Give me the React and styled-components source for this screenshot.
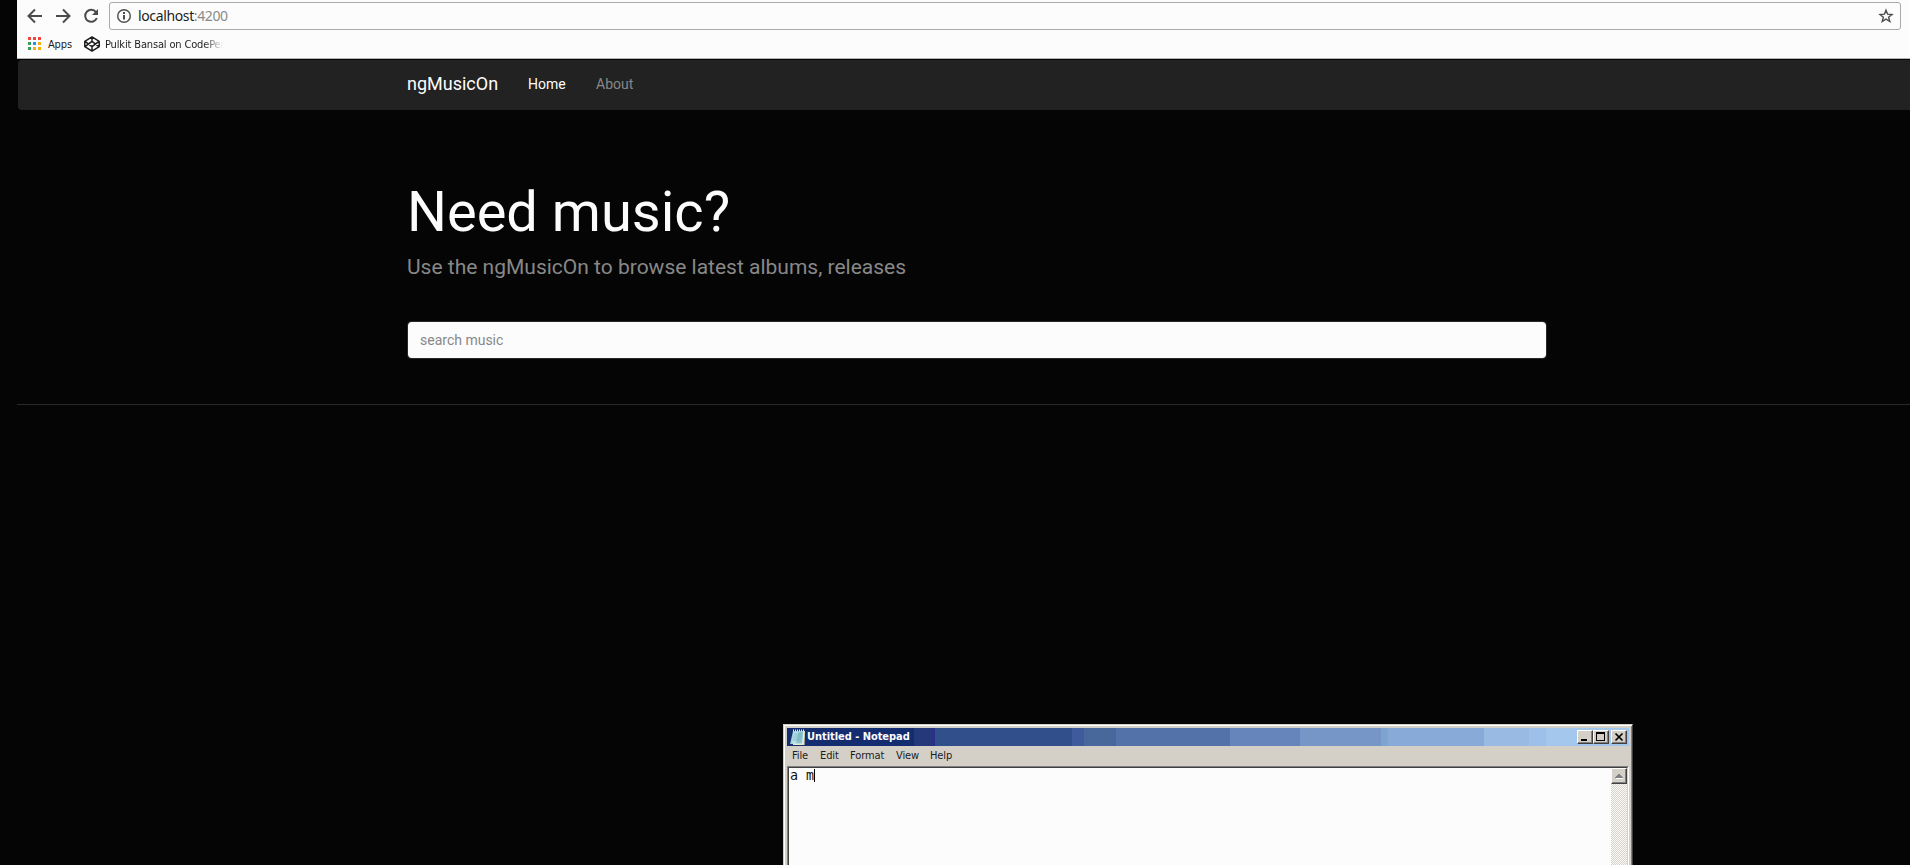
import React from "react";
import styled, { createGlobalStyle } from "styled-components";

const Global = createGlobalStyle`
  * { box-sizing: border-box; }
  html, body { margin: 0; background: #050505; overflow: hidden; }
`;

const Desktop = styled.div`
  position: relative;
  width: 1910px;
  height: 865px;
  padding-left: 17px;
  background: #050505;
  overflow: hidden;
  font-family: Roboto, sans-serif;
`;

const BrowserChrome = styled.header`
  height: 59px;
  padding-top: 2px;
  background: #fcfcfc;
  border-bottom: 1px solid #b4b4b4;
`;

const Toolbar = styled.div`
  display: flex;
  align-items: center;
  height: 28px;
  padding: 0 9px 0 10px;
`;

const ToolIcon = styled.svg`
  flex: none;
  width: 16px;
  height: 16px;
  margin-right: ${(p) => p.$gap || 0}px;
  fill: none;
  stroke: #4c4c4c;
  stroke-width: 2;
`;

const AddressBar = styled.div`
  display: flex;
  align-items: center;
  flex: 1;
  height: 28px;
  padding: 0 6px 0 6px;
  border: 1px solid #a9a9a9;
  border-radius: 3px;
  background: #fcfcfc;
`;

const Url = styled.div`
  flex: 1;
  font: 14px/20px "Noto Sans", sans-serif;
  letter-spacing: -0.37px;
  color: #1c1c1c;
  span { color: #8a8a8a; }
`;

const Bookmarks = styled.div`
  display: flex;
  align-items: center;
  height: 28px;
  padding-left: 11px;
`;

const Bookmark = styled.div`
  display: flex;
  align-items: center;
  gap: ${(p) => p.$gap}px;
  width: ${(p) => p.$width}px;
  font: 11px/16px "DejaVu Sans Condensed", sans-serif;
  font-stretch: condensed;
  letter-spacing: -0.15px;
  white-space: nowrap;
  color: #1c1c1c;
  svg { flex: none; }
`;

const BookmarkLabel = styled.span`
  padding-top: 2px;
`;

const FadingLabel = styled(BookmarkLabel)`
  width: 118px;
  overflow: hidden;
  mask-image: linear-gradient(to right, #000 84%, transparent);
`;

const Navbar = styled.nav`
  display: flex;
  align-items: center;
  height: 50px;
  margin: 1px 0 0 1px;
  padding: 0 0 2px 389px;
  background: #222;
  border-radius: 4px 0 0 4px;
`;

const Brand = styled.a`
  width: 121px;
  font-size: 18px;
  line-height: 20px;
  color: #fcfcfc;
`;

const NavItem = styled.a`
  width: 68px;
  font-size: 14px;
  line-height: 20px;
  color: ${(p) => (p.$active ? "#fcfcfc" : "#888")};
`;

const Main = styled.main`
  padding: 71px 0 0 390px;
`;

const Title = styled.h1`
  margin: 0;
  font-size: 56px;
  font-weight: 400;
  line-height: 62px;
  color: #fcfcfc;
`;

const Lead = styled.p`
  margin: 9px 0 39px;
  font-size: 21px;
  line-height: 30px;
  color: #888;
`;

const SearchInput = styled.input`
  display: block;
  width: 1140px;
  height: 38px;
  padding: 0 12px;
  border: 1px solid #282828;
  border-radius: 4px;
  outline: none;
  background: #fcfcfc;
  background-clip: padding-box;
  font: 14px/20px Roboto, sans-serif;
  &::placeholder { color: #888; opacity: 1; }
`;

const Divider = styled.hr`
  margin: 45px 0 0;
  border: 0;
  border-top: 1px solid #282828;
`;

const Window = styled.section`
  position: absolute;
  left: 783px;
  top: 724px;
  width: 850px;
  height: 180px;
  padding: 2px;
  background: #d4d0c8;
  border: 1px solid;
  border-color: #d4d0c8 #404040 #404040 #d4d0c8;
  box-shadow: inset 1px 1px #fff, inset -1px 0 #808080;
`;

const TitleBar = styled.div`
  display: flex;
  align-items: center;
  height: 18px;
  margin: 1px 1px 0;
  padding: 0 2px 0 3px;
  background: linear-gradient(
    to right,
    #142c70 0 127px, #24387a 127px 145px, #28328a 145px 148px,
    #304f8b 148px 285px, #405b9b 285px 297px, #48679b 297px 329px,
    #5372a9 329px 443px, #6685bb 443px 513px, #7796c8 513px 594px,
    #7ca4cf 594px 601px, #88aad9 601px 697px, #98bae3 697px 742px,
    #9dc0ea 742px 759px, #a3c7ed 759px
  );
`;

const WindowTitle = styled.div`
  flex: 1;
  margin-left: 2px;
  font: bold 11px/16px "DejaVu Sans Condensed", sans-serif;
  font-stretch: condensed;
  letter-spacing: -0.04px;
  color: #fcfcfc;
`;

const RaisedButton = styled.button`
  flex: none;
  display: block;
  width: 16px;
  height: ${(p) => p.$height || 14}px;
  margin-left: ${(p) => p.$gap || 0}px;
  padding: 0;
  border: 1px solid;
  border-color: #fff #404040 #404040 #fff;
  background: #d4d0c8;
  box-shadow: inset -1px -1px #808080;
  svg { display: block; }
`;

const MenuBar = styled.div`
  display: flex;
  height: 20px;
  margin: 0 1px;
  padding-left: 5px;
  font: 11px/20px "DejaVu Sans Condensed", sans-serif;
  font-stretch: condensed;
  letter-spacing: -0.1px;
  color: #1c1c1c;
`;

const MenuItem = styled.span`
  width: ${(p) => p.$width}px;
`;

const Editor = styled.div`
  display: flex;
  height: 120px;
  margin: 0 1px;
  border: 1px solid;
  border-color: #808080 #fff #fff #808080;
`;

const EditorInner = styled.div`
  display: flex;
  flex: 1;
  border: 1px solid;
  border-color: #404040 #d4d0c8 #d4d0c8 #404040;
`;

const TextArea = styled.div`
  display: flex;
  flex: 1;
  padding: 1px 0 0 1px;
  background: #fcfcfc;
  font: 13.3px/13px "DejaVu Sans Mono", monospace;
  white-space: pre;
  color: #111;
`;

const Caret = styled.i`
  width: 1px;
  height: 13px;
  background: #000;
`;

const ScrollTrack = styled.div`
  width: 16px;
  background: repeating-conic-gradient(#fcfcfc 0 25%, #d4d0c8 0 50%) 0 0 / 2px 2px;
`;

const dots = [
  ["#f0453a", "#f0453a", "#f0453a"],
  ["#33a15a", "#2490f0", "#f7ae0c"],
  ["#33a15a", "#f7ae0c", "#f7ae0c"],
];

const AppsIcon = () => (
  <svg width="13" height="14" shapeRendering="crispEdges">
    {dots.map((row, y) =>
      row.map((c, x) => (
        <rect key={`${x}${y}`} x={x * 5} y={y * 5} width="3" height="3" fill={c} />
      ))
    )}
  </svg>
);

const CodePenIcon = () => (
  <svg width="16" height="16" viewBox="0 0 16 16" fill="none" stroke="#1c1c1c" strokeWidth="1.5" strokeLinejoin="round">
    <path d="M8 .9 15.200 5.300v5.400L8 15.100.8 10.700V5.300zM8 1v4.300M8 10.700V15M1 5.300l7 5.400 7-5.400M1 10.700l7-5.400 7 5.400" />
  </svg>
);

const NotepadIcon = () => (
  <svg width="15" height="16" viewBox="0 0 15 16">
    <path d="M4 2h11l-.5 14H3z" fill="#e4ddae" />
    <path d="M3 2h10.500l-1 13H0z" fill="#8cc5d0" />
    <path d="M3.500 3h5L6 14.500H1z" fill="#b8e0e6" />
    <path d="M13.700 2.500l-1 12.500H3" fill="none" stroke="#edf5ee" />
    <path d="M3 1.500h11" stroke="#e9f0ef" strokeDasharray="1 1" strokeWidth="2" />
    <path d="M4 5h8M3.500 7h8M3 9h8M2.500 11h8" stroke="#65a8b8" strokeWidth=".6" />
  </svg>
);

export default function App() {
  return (
    <Desktop>
      <Global />
      <BrowserChrome>
        <Toolbar>
          <ToolIcon $gap={12} viewBox="0 0 16 16">
            <path d="M15 8H2.500M8 1.500 1.500 8 8 14.500" />
          </ToolIcon>
          <ToolIcon $gap={12} viewBox="0 0 16 16">
            <path d="M1 8h12.500M8 1.500 14.500 8 8 14.500" />
          </ToolIcon>
          <ToolIcon $gap={10} viewBox="0 0 16 16">
            <path d="M13 4.200A6 6 0 1 0 13.800 10" />
            <path d="M15 1v6H9z" fill="#4c4c4c" stroke="none" />
          </ToolIcon>
          <AddressBar>
            <ToolIcon $gap={6} viewBox="0 0 16 16">
              <circle cx="8" cy="8" r="6.300" strokeWidth="1.400" />
              <path d="M8 7v4.500M8 4v2" />
            </ToolIcon>
            <Url>localhost<span>:4200</span></Url>
            <ToolIcon viewBox="0 0 16 16">
              <path strokeWidth="1.400" d="m8 2.200 1.600 4 4.400.3-3.400 2.700 1.200 4.300L8 11.100l-3.800 2.400 1.200-4.300L2 6.500l4.400-.3z" />
            </ToolIcon>
          </AddressBar>
        </Toolbar>
        <Bookmarks>
          <Bookmark $gap={7} $width={56}>
            <AppsIcon />
            <BookmarkLabel>Apps</BookmarkLabel>
          </Bookmark>
          <Bookmark $gap={5} $width={139}>
            <CodePenIcon />
            <FadingLabel>Pulkit Bansal on CodePen</FadingLabel>
          </Bookmark>
        </Bookmarks>
      </BrowserChrome>
      <Navbar>
        <Brand>ngMusicOn</Brand>
        <NavItem $active>Home</NavItem>
        <NavItem>About</NavItem>
      </Navbar>
      <Main>
        <Title>Need music?</Title>
        <Lead>Use the ngMusicOn to browse latest albums, releases</Lead>
        <SearchInput placeholder="search music" />
      </Main>
      <Divider />
      <Window>
        <TitleBar>
          <NotepadIcon />
          <WindowTitle>Untitled - Notepad</WindowTitle>
          <RaisedButton>
            <svg width="14" height="12"><path d="M3 8h6v2H3z" /></svg>
          </RaisedButton>
          <RaisedButton>
            <svg width="14" height="12" shapeRendering="crispEdges">
              <path fillRule="evenodd" d="M2 1h9v9H2zM3 3v6h7V3z" />
            </svg>
          </RaisedButton>
          <RaisedButton $gap={2}>
            <svg width="14" height="12"><path d="m3.500 2.500 7 7m0-7-7 7" stroke="#000" strokeWidth="1.700" /></svg>
          </RaisedButton>
        </TitleBar>
        <MenuBar>
          <MenuItem $width={28}>File</MenuItem>
          <MenuItem $width={30}>Edit</MenuItem>
          <MenuItem $width={46}>Format</MenuItem>
          <MenuItem $width={34}>View</MenuItem>
          <MenuItem $width={30}>Help</MenuItem>
        </MenuBar>
        <Editor>
          <EditorInner>
            <TextArea>a m<Caret /></TextArea>
            <ScrollTrack>
              <RaisedButton $height={16}>
                <svg width="14" height="14" shapeRendering="crispEdges">
                  <path d="M4 9h7v1H4z" fill="#fff" />
                  <path d="M6 5h2v1h1v1h1v1h1v1H3V8h1V7h1V6h1z" fill="#808080" />
                </svg>
              </RaisedButton>
            </ScrollTrack>
          </EditorInner>
        </Editor>
      </Window>
    </Desktop>
  );
}
